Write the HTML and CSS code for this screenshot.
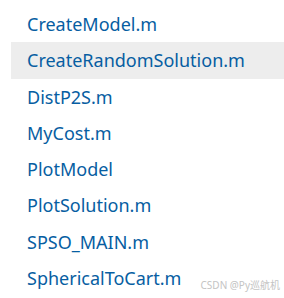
FILE: index.html
```html
<!DOCTYPE html>
<html>
<head>
    <meta charset="UTF-8">
    <title>Files</title>
    <link rel="stylesheet" href="styles.css">
</head>
<body>
    <ul class="file-list">
        <li>CreateModel.m</li>
        <li class="selected">CreateRandomSolution.m</li>
        <li>DistP2S.m</li>
        <li>MyCost.m</li>
        <li>PlotModel</li>
        <li>PlotSolution.m</li>
        <li>SPSO_MAIN.m</li>
        <li>SphericalToCart.m</li>
    </ul>
    <div class="watermark">CSDN @Py巡航机</div>
</body>
</html>
```

FILE: styles.css
```css
body {
    margin: 0;
    background-color: #ffffff;
    font-family: "Noto Sans", "Open Sans", sans-serif;
    width: 284px;
    height: 298px;
    overflow: hidden;
    position: relative;
}
.file-list {
    list-style: none;
    margin: 0;
    padding: 6px 0 0 11px;
}
.file-list li {
    height: 36.3px;
    line-height: 36px;
    padding-left: 16px;
    font-size: 18px;
    color: #075ea2;
}
.file-list li.selected {
    background-color: #ededed;
}
.watermark {
    position: absolute;
    right: 4px;
    bottom: 6px;
    font-size: 10px;
    color: #c4c4c4;
    font-family: "Noto Sans", "Noto Sans CJK SC", sans-serif;
}
```
